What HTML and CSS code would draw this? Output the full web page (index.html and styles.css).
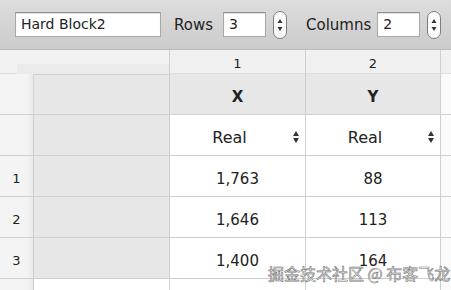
FILE: index.html
```html
<!DOCTYPE html>
<html lang="en">
<head>
    <meta charset="UTF-8">
    <title>Hard Block2</title>
    <link rel="stylesheet" href="styles.css">
</head>
<body>
    <div class="window">
        <div class="toolbar">
            <div class="field name-field">Hard Block2</div>
            <span class="label">Rows</span>
            <div class="field num-field">3</div>
            <svg class="stepper" width="14" height="28" viewBox="0 0 14 28">
                <rect x="0.5" y="0.5" width="13" height="27" rx="6.5" fill="#fbfbfb" stroke="#7d7d7d"/>
                <path d="M7 8 L9.5 12 L4.5 12 Z" fill="#333"/>
                <path d="M7 20 L9.5 16 L4.5 16 Z" fill="#333"/>
            </svg>
            <span class="label cols-label">Columns</span>
            <div class="field num-field">2</div>
            <svg class="stepper" width="14" height="28" viewBox="0 0 14 28">
                <rect x="0.5" y="0.5" width="13" height="27" rx="6.5" fill="#fbfbfb" stroke="#7d7d7d"/>
                <path d="M7 8 L9.5 12 L4.5 12 Z" fill="#333"/>
                <path d="M7 20 L9.5 16 L4.5 16 Z" fill="#333"/>
            </svg>
        </div>

        <div class="sheet">
            <!-- column numbers -->
            <div class="cell colnum corner"><div class="corner-inset"></div></div>
            <div class="cell colnum">1</div>
            <div class="cell colnum">2</div>
            <div class="cell colnum filler"></div>

            <!-- column names -->
            <div class="cell rowhead"></div>
            <div class="cell blank top-blank"></div>
            <div class="cell colname">X</div>
            <div class="cell colname">Y</div>
            <div class="cell filler"></div>

            <!-- column types -->
            <div class="cell rowhead"></div>
            <div class="cell blank"></div>
            <div class="cell coltype">Real<span class="arrows"><i class="up"></i><i class="down"></i></span></div>
            <div class="cell coltype">Real<span class="arrows"><i class="up"></i><i class="down"></i></span></div>
            <div class="cell filler"></div>

            <div class="cell rowhead">1</div>
            <div class="cell blank"></div>
            <div class="cell data">1,763</div>
            <div class="cell data">88</div>
            <div class="cell filler"></div>

            <div class="cell rowhead">2</div>
            <div class="cell blank"></div>
            <div class="cell data">1,646</div>
            <div class="cell data">113</div>
            <div class="cell filler"></div>

            <div class="cell rowhead">3</div>
            <div class="cell blank"></div>
            <div class="cell data">1,400</div>
            <div class="cell data">164</div>
            <div class="cell filler"></div>

            <div class="cell rowhead"></div>
            <div class="cell data-empty"></div>
            <div class="cell data-empty"></div>
            <div class="cell data-empty"></div>
            <div class="cell filler"></div>
        </div>

        <div class="watermark">掘金技术社区 @ 布客飞龙</div>
    </div>
</body>
</html>
```

FILE: styles.css
```css
* {
    margin: 0;
    padding: 0;
    box-sizing: border-box;
}

body {
    width: 451px;
    height: 290px;
    overflow: hidden;
    font-family: 'DejaVu Sans', 'Noto Sans CJK SC', sans-serif;
    color: #222;
    background: #fff;
}

.window {
    position: relative;
    width: 451px;
    height: 290px;
    overflow: hidden;
}

.toolbar {
    height: 50px;
    display: flex;
    align-items: center;
    padding-left: 15px;
    background: linear-gradient(#dddddd, #cbcbcb);
    border-bottom: 1px solid #bcbcbc;
}

.field {
    height: 25px;
    background: #fff;
    border: 1px solid #a9a9a9;
    border-top-color: #8f8f8f;
    box-shadow: inset 0 1px 1px rgba(0, 0, 0, 0.12);
    font-size: 14px;
    line-height: 23px;
    padding-left: 5px;
}

.name-field {
    width: 146px;
}

.label {
    font-size: 15px;
    margin-left: 13px;
    margin-right: 10px;
}

.cols-label {
    margin-left: 19px;
    margin-right: 6px;
}

.num-field {
    width: 43px;
}

.stepper {
    margin-left: 7px;
}

.sheet {
    display: grid;
    grid-template-columns: 34px 136px 136px 135px 10px;
    grid-template-rows: 24px repeat(6, 41px);
}

.cell {
    border-right: 1px solid #cfcfcf;
    border-bottom: 1px solid #cfcfcf;
    display: flex;
    align-items: center;
    justify-content: center;
    padding-top: 5px;
    font-size: 15px;
}

.colnum {
    background: #f0f0f0;
    font-size: 13px;
    padding-top: 3px;
    border-bottom-color: #dedede;
}

.corner {
    grid-column: span 2;
    position: relative;
    background: #f2f2f2;
}

.corner-inset {
    position: absolute;
    left: 17px;
    right: 0;
    top: 14px;
    bottom: -1px;
    background: #ebebeb;
}

.filler {
    background: #fafafa;
    border-right: none;
}

.colnum.filler {
    background: #f0f0f0;
}

.rowhead {
    background: linear-gradient(to right, #f4f4f4 80%, #e9e9e9);
    font-size: 13px;
}

.blank {
    background: #e7e7e7;
}

.top-blank {
    border-top: 1px solid #cfcfcf;
    border-left: 1px solid #d7d7d7;
    margin-left: -1px;
}

.colname {
    background: #e7e7e7;
    font-weight: bold;
    font-size: 15px;
}

.coltype {
    background: #fff;
    padding-right: 16px;
    position: relative;
    font-size: 16px;
}

.arrows {
    position: absolute;
    right: 6px;
    top: 16px;
    display: flex;
    flex-direction: column;
    gap: 2px;
}

.arrows i {
    display: block;
    width: 0;
    height: 0;
    border-left: 3px solid transparent;
    border-right: 3px solid transparent;
}

.arrows .up {
    border-bottom: 5px solid #333;
}

.arrows .down {
    border-top: 5px solid #333;
}

.data,
.data-empty {
    background: #fff;
}

.watermark {
    position: absolute;
    left: 268px;
    top: 261px;
    font-family: 'Noto Sans CJK SC', sans-serif;
    font-size: 16px;
    color: rgba(255, 255, 255, 0.9);
    -webkit-text-stroke: 0.6px #777;
    white-space: nowrap;
}
```
